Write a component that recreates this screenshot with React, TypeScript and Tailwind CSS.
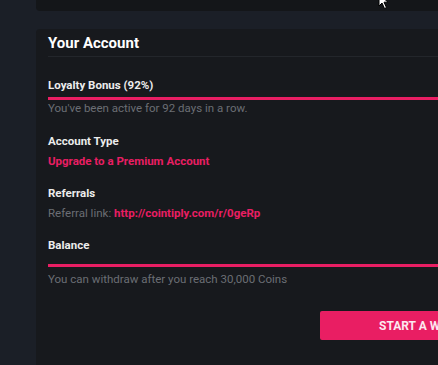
import React from "react";

export default function App() {
  return (
    <div
      className="relative w-[438px] h-[365px] overflow-hidden bg-[#1b1f27] pl-[36px] flex flex-col"
      style={{ fontFamily: "Roboto, 'Liberation Sans', sans-serif" }}
    >
      <div className="h-[11px] shrink-0 rounded-bl-[4px] bg-[#141619]" />
      <div className="mt-[18px] flex-1 rounded-tl-[4px] bg-[#17191d] pl-[12px] pt-[4px]">
        <h2 className="text-[15px] leading-[20px] font-bold text-white">Your Account</h2>
        <div className="mt-[3px] h-px bg-[#23262b]" />

        <div className="mt-[21px] text-[11.5px] leading-[14px] font-bold text-[#ececec]">Loyalty Bonus (92%)</div>
        <div className="mt-[5px] h-[3px] bg-[#e91e63]" />
        <div className="mt-[1px] text-[11.5px] leading-[14px] text-[#6b6e74]">You've been active for 92 days in a row.</div>

        <div className="mt-[19px] text-[11.5px] leading-[14px] font-bold text-[#ececec]">Account Type</div>
        <div className="mt-[6px] text-[11.5px] leading-[14px] font-bold text-[#e91e63]">Upgrade to a Premium Account</div>

        <div className="mt-[18px] text-[11.5px] leading-[14px] font-bold text-[#ececec]">Referrals</div>
        <div className="mt-[6px] text-[11.5px] leading-[14px] text-[#6b6e74]">
          Referral link: <span className="font-bold text-[#e91e63]">http://cointiply.com/r/0geRp</span>
        </div>

        <div className="mt-[18px] text-[11.5px] leading-[14px] font-bold text-[#ececec]">Balance</div>
        <div className="mt-[12px] h-[3px] bg-[#e91e63]" />
        <div className="mt-[5px] text-[11.5px] leading-[14px] text-[#6b6e74]">You can withdraw after you reach 30,000 Coins</div>

        <div className="mt-[25px] ml-[272px] flex h-[29px] w-[200px] items-center rounded-[2px] bg-[#e91e63] pl-[59px] whitespace-nowrap text-[12px] font-bold text-[#fde8ef]">
          START A WITHDRAWAL
        </div>
      </div>

      <svg className="absolute left-[378px] top-[-7px]" width="14" height="18" viewBox="0 0 14 18">
        <path d="M1 1 L1 13 L4 10 L6.5 15.5 L8.5 14.6 L6 9.2 L10 9.2 Z" fill="#fff" stroke="#000" strokeWidth="1" />
      </svg>
    </div>
  );
}
